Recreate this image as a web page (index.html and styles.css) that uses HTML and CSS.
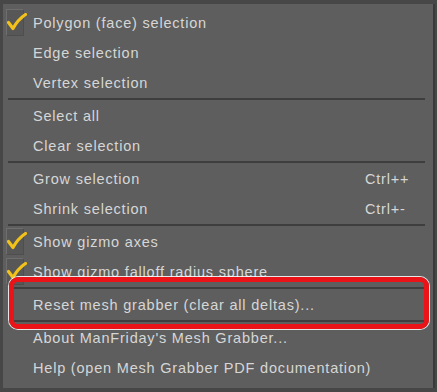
FILE: index.html
```html
<!DOCTYPE html>
<html>
<head>
<meta charset="utf-8">
<link rel="stylesheet" href="styles.css">
</head>
<body>
<div class="menu">
  <div class="item checked"><span class="check"><svg width="20" height="20" viewBox="0 0 20 20"><path d="M1.5 9.5 L6 15.5 C9 10 12.5 5.5 18.5 1.5" fill="none" stroke="#f2c21a" stroke-width="3.2" stroke-linecap="round" stroke-linejoin="round"/></svg></span><span class="label">Polygon (face) selection</span></div>
  <div class="item"><span class="label">Edge selection</span></div>
  <div class="item"><span class="label">Vertex selection</span></div>
  <div class="sep"></div>
  <div class="item"><span class="label">Select all</span></div>
  <div class="item"><span class="label">Clear selection</span></div>
  <div class="sep"></div>
  <div class="item"><span class="label">Grow selection</span><span class="key">Ctrl++</span></div>
  <div class="item"><span class="label">Shrink selection</span><span class="key">Ctrl+-</span></div>
  <div class="sep"></div>
  <div class="item checked"><span class="check"><svg width="20" height="20" viewBox="0 0 20 20"><path d="M1.5 9.5 L6 15.5 C9 10 12.5 5.5 18.5 1.5" fill="none" stroke="#f2c21a" stroke-width="3.2" stroke-linecap="round" stroke-linejoin="round"/></svg></span><span class="label">Show gizmo axes</span></div>
  <div class="item checked"><span class="check"><svg width="20" height="20" viewBox="0 0 20 20"><path d="M1.5 9.5 L6 15.5 C9 10 12.5 5.5 18.5 1.5" fill="none" stroke="#f2c21a" stroke-width="3.2" stroke-linecap="round" stroke-linejoin="round"/></svg></span><span class="label">Show gizmo falloff radius sphere</span></div>
  <div class="sep"></div>
  <div class="item"><span class="label">Reset mesh grabber (clear all deltas)...</span></div>
  <div class="sep"></div>
  <div class="item"><span class="label">About ManFriday's Mesh Grabber...</span></div>
  <div class="item"><span class="label">Help (open Mesh Grabber PDF documentation)</span></div>
  <div class="highlight"></div>
</div>
</body>
</html>
```

FILE: styles.css
```css
html, body {
  margin: 0;
  padding: 0;
}
body {
  background: #474747;
  width: 437px;
  height: 392px;
  overflow: hidden;
  padding: 4px 4px 4px 3px;
  box-sizing: border-box;
}
.menu {
  position: relative;
  background: #5e5e5e;
  height: 384px;
  box-sizing: border-box;
  padding-top: 4px;
  box-shadow: 2px 0 0 #3a3a3a;
  font-family: "Liberation Sans", Arial, sans-serif;
  font-size: 14.5px;
  letter-spacing: 0.8px;
  color: #d6d6d6;
}
.item {
  position: relative;
  height: 30px;
  display: flex;
  align-items: center;
  padding-left: 30px;
}
.label {
  flex: 1;
  white-space: nowrap;
}
.key {
  width: 68px;
  white-space: nowrap;
}
.check {
  position: absolute;
  left: 3px;
  top: 1px;
  width: 16px;
  height: 25px;
  background: #575757;
  border: 1px solid #6e6e6e;
  border-right-color: #4e4e4e;
  border-bottom-color: #4e4e4e;
}
.check svg {
  position: absolute;
  left: 0px;
  top: 3px;
}
.sep {
  height: 3px;
  margin: 0 8px 0 5px;
  border-top: 2px solid #3e3e3e;
  box-sizing: border-box;
}
.highlight {
  position: absolute;
  left: 6px;
  top: 273px;
  width: 420px;
  height: 52px;
  box-sizing: border-box;
  border: 5px solid #ea1418;
  border-radius: 9px;
  box-shadow: 0 0 0 1px rgba(255,255,255,0.85);
}
```
